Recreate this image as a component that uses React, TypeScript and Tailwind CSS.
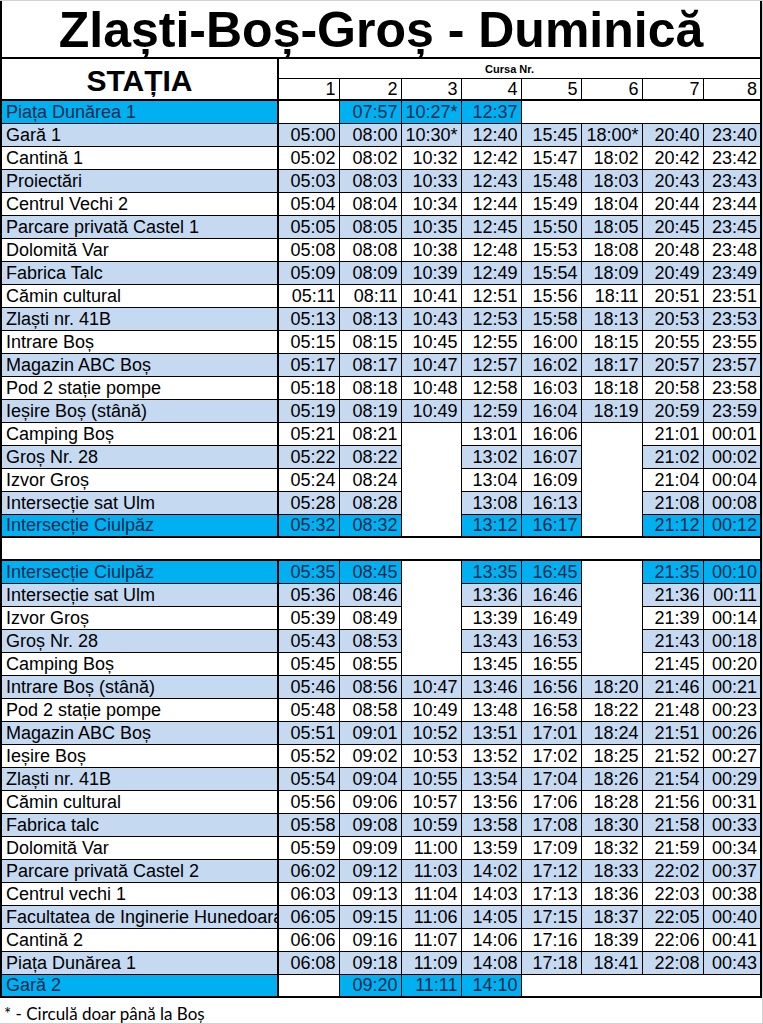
import React from 'react'

type Tone = 'white' | 'light' | 'bright'

interface Row {
  name: string
  tone: Tone
  times: string[]
}

// '-' marks a cell that is part of a merged blank block (col 3 and col 6)
const outbound: Row[] = [
  { name: 'Piața Dunărea 1', tone: 'bright', times: ['', '07:57', '10:27*', '12:37'] },
  { name: 'Gară 1', tone: 'light', times: ['05:00', '08:00', '10:30*', '12:40', '15:45', '18:00*', '20:40', '23:40'] },
  { name: 'Cantină 1', tone: 'white', times: ['05:02', '08:02', '10:32', '12:42', '15:47', '18:02', '20:42', '23:42'] },
  { name: 'Proiectări', tone: 'light', times: ['05:03', '08:03', '10:33', '12:43', '15:48', '18:03', '20:43', '23:43'] },
  { name: 'Centrul Vechi 2', tone: 'white', times: ['05:04', '08:04', '10:34', '12:44', '15:49', '18:04', '20:44', '23:44'] },
  { name: 'Parcare privată Castel 1', tone: 'light', times: ['05:05', '08:05', '10:35', '12:45', '15:50', '18:05', '20:45', '23:45'] },
  { name: 'Dolomită Var', tone: 'white', times: ['05:08', '08:08', '10:38', '12:48', '15:53', '18:08', '20:48', '23:48'] },
  { name: 'Fabrica Talc', tone: 'light', times: ['05:09', '08:09', '10:39', '12:49', '15:54', '18:09', '20:49', '23:49'] },
  { name: 'Cămin cultural', tone: 'white', times: ['05:11', '08:11', '10:41', '12:51', '15:56', '18:11', '20:51', '23:51'] },
  { name: 'Zlaști nr. 41B', tone: 'light', times: ['05:13', '08:13', '10:43', '12:53', '15:58', '18:13', '20:53', '23:53'] },
  { name: 'Intrare Boș', tone: 'white', times: ['05:15', '08:15', '10:45', '12:55', '16:00', '18:15', '20:55', '23:55'] },
  { name: 'Magazin ABC Boș', tone: 'light', times: ['05:17', '08:17', '10:47', '12:57', '16:02', '18:17', '20:57', '23:57'] },
  { name: 'Pod 2 stație pompe', tone: 'white', times: ['05:18', '08:18', '10:48', '12:58', '16:03', '18:18', '20:58', '23:58'] },
  { name: 'Ieșire Boș (stână)', tone: 'light', times: ['05:19', '08:19', '10:49', '12:59', '16:04', '18:19', '20:59', '23:59'] },
  { name: 'Camping Boș', tone: 'white', times: ['05:21', '08:21', '-', '13:01', '16:06', '-', '21:01', '00:01'] },
  { name: 'Groș Nr. 28', tone: 'light', times: ['05:22', '08:22', '-', '13:02', '16:07', '-', '21:02', '00:02'] },
  { name: 'Izvor Groș', tone: 'white', times: ['05:24', '08:24', '-', '13:04', '16:09', '-', '21:04', '00:04'] },
  { name: 'Intersecție sat Ulm', tone: 'light', times: ['05:28', '08:28', '-', '13:08', '16:13', '-', '21:08', '00:08'] },
  { name: 'Intersecție Ciulpăz', tone: 'bright', times: ['05:32', '08:32', '-', '13:12', '16:17', '-', '21:12', '00:12'] },
]

const inbound: Row[] = [
  { name: 'Intersecție Ciulpăz', tone: 'bright', times: ['05:35', '08:45', '-', '13:35', '16:45', '-', '21:35', '00:10'] },
  { name: 'Intersecție sat Ulm', tone: 'light', times: ['05:36', '08:46', '-', '13:36', '16:46', '-', '21:36', '00:11'] },
  { name: 'Izvor Groș', tone: 'white', times: ['05:39', '08:49', '-', '13:39', '16:49', '-', '21:39', '00:14'] },
  { name: 'Groș Nr. 28', tone: 'light', times: ['05:43', '08:53', '-', '13:43', '16:53', '-', '21:43', '00:18'] },
  { name: 'Camping Boș', tone: 'white', times: ['05:45', '08:55', '-', '13:45', '16:55', '-', '21:45', '00:20'] },
  { name: 'Intrare Boș (stână)', tone: 'light', times: ['05:46', '08:56', '10:47', '13:46', '16:56', '18:20', '21:46', '00:21'] },
  { name: 'Pod 2 stație pompe', tone: 'white', times: ['05:48', '08:58', '10:49', '13:48', '16:58', '18:22', '21:48', '00:23'] },
  { name: 'Magazin ABC Boș', tone: 'light', times: ['05:51', '09:01', '10:52', '13:51', '17:01', '18:24', '21:51', '00:26'] },
  { name: 'Ieșire Boș', tone: 'white', times: ['05:52', '09:02', '10:53', '13:52', '17:02', '18:25', '21:52', '00:27'] },
  { name: 'Zlaști nr. 41B', tone: 'light', times: ['05:54', '09:04', '10:55', '13:54', '17:04', '18:26', '21:54', '00:29'] },
  { name: 'Cămin cultural', tone: 'white', times: ['05:56', '09:06', '10:57', '13:56', '17:06', '18:28', '21:56', '00:31'] },
  { name: 'Fabrica talc', tone: 'light', times: ['05:58', '09:08', '10:59', '13:58', '17:08', '18:30', '21:58', '00:33'] },
  { name: 'Dolomită Var', tone: 'white', times: ['05:59', '09:09', '11:00', '13:59', '17:09', '18:32', '21:59', '00:34'] },
  { name: 'Parcare privată Castel 2', tone: 'light', times: ['06:02', '09:12', '11:03', '14:02', '17:12', '18:33', '22:02', '00:37'] },
  { name: 'Centrul vechi 1', tone: 'white', times: ['06:03', '09:13', '11:04', '14:03', '17:13', '18:36', '22:03', '00:38'] },
  { name: 'Facultatea de Inginerie Hunedoara', tone: 'light', times: ['06:05', '09:15', '11:06', '14:05', '17:15', '18:37', '22:05', '00:40'] },
  { name: 'Cantină 2', tone: 'white', times: ['06:06', '09:16', '11:07', '14:06', '17:16', '18:39', '22:06', '00:41'] },
  { name: 'Piața Dunărea 1', tone: 'light', times: ['06:08', '09:18', '11:09', '14:08', '17:18', '18:41', '22:08', '00:43'] },
  { name: 'Gară 2', tone: 'bright', times: ['', '09:20', '11:11', '14:10'] },
]

const toneClass: Record<Tone, string> = {
  white: 'bg-white text-black',
  light: 'bg-[#c5d9f1] text-black',
  bright: 'bg-[#00b0f0] text-[#0c2a4d]',
}

const colWidths = ['w-[277px]', 'w-[61px]', 'w-[62px]', 'w-[60px]', 'w-[60px]', 'w-[60px]', 'w-[61px]', 'w-[61px]', 'w-[58px]']

function TimeRows({ rows }: { rows: Row[] }) {
  return (
    <>
      {rows.map((row, i) => {
        const isLast = i === rows.length - 1
        const bottom = isLast ? 'border-b-2' : 'border-b'
        const tone = toneClass[row.tone]
        const partial = row.times.length < 8
        return (
          <tr key={row.name + i} className="h-[23px]">
            <td
              className={`${tone} ${bottom} border-r-2 border-black pl-[4px] whitespace-nowrap overflow-hidden text-[18px] leading-none`}
            >
              {row.name}
            </td>
            {row.times.map((t, c) => {
              if (t === '-') {
                const prev = i > 0 ? rows[i - 1].times[c] : ''
                if (prev === '-') return null
                const span = rows.slice(i).filter(r => r.times[c] === '-').length
                return (
                  <td
                    key={c}
                    rowSpan={span}
                    className={`bg-white border border-black ${i + span === rows.length ? 'border-b-2' : ''}`}
                  />
                )
              }
              const cellTone = t === '' ? 'bg-white' : tone
              return (
                <td
                  key={c}
                  className={`${cellTone} border border-black ${isLast ? 'border-b-2' : ''} pr-[3px] text-right text-[18px] leading-none whitespace-nowrap`}
                >
                  {t}
                </td>
              )
            })}
            {partial && (
              <td colSpan={4} className={`bg-white border border-black ${isLast ? 'border-b-2' : ''}`} />
            )}
          </tr>
        )
      })}
    </>
  )
}

export default function App() {
  return (
    <div className="w-[763px] h-[1024px] bg-white border-t border-r border-b border-[#d2d2d2] font-['Liberation_Sans',Arial,sans-serif] text-black">
      <table className="table-fixed border-collapse w-[760px] border-x-2 border-black">
        <colgroup>
          {colWidths.map((w, i) => (
            <col key={i} className={w} />
          ))}
        </colgroup>
        <tbody>
          <tr className="h-[57px]">
            <td colSpan={9} className="border-b-2 border-black text-center text-[50px] font-bold leading-none pt-[2px]">
              Zlaști-Boș-Groș - Duminică
            </td>
          </tr>
          <tr className="h-[20px]">
            <td rowSpan={2} className="border-r-2 border-b-2 border-black text-center text-[30px] font-bold leading-none pt-[4px]">
              STAȚIA
            </td>
            <td colSpan={8} className="border-b border-black text-center text-[11px] font-bold leading-none pr-[20px] pt-[2px]">
              Cursa Nr.
            </td>
          </tr>
          <tr className="h-[22px]">
            {[1, 2, 3, 4, 5, 6, 7, 8].map(n => (
              <td key={n} className="border border-black border-b-2 text-right pr-[3px] text-[18px] leading-none align-bottom pb-[1px]">
                {n}
              </td>
            ))}
          </tr>
          <TimeRows rows={outbound} />
          <tr className="h-[23px]">
            <td colSpan={9} className="bg-white border-b-2 border-black" />
          </tr>
          <TimeRows rows={inbound} />
        </tbody>
      </table>
      <p className="font-['Lato','Carlito',sans-serif] text-[17px] leading-none pl-[4px] pt-[7px]">
        * - Circulă doar până la Boș
      </p>
    </div>
  )
}
